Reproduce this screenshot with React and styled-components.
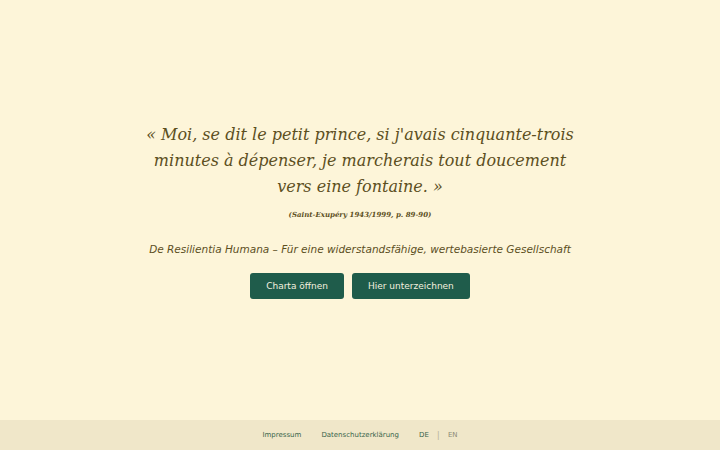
import React from 'react';
import styled, { createGlobalStyle } from 'styled-components';

const GlobalStyle = createGlobalStyle`
  html, body {
    margin: 0;
    padding: 0;
    background: #fdf5d9;
  }
  #root {
    min-height: 100vh;
  }
`;

const Page = styled.div`
  display: flex;
  flex-direction: column;
  height: 100vh;
  background: #fdf5d9;
  color: #5c4f1e;
`;

const Main = styled.main`
  flex: 1;
  display: flex;
  flex-direction: column;
  align-items: center;
  justify-content: center;
  text-align: center;
  padding: 0 20px;
`;

const Quote = styled.blockquote`
  margin: 0;
  max-width: 440px;
  font-family: 'DejaVu Serif', serif;
  font-style: italic;
  font-size: 16px;
  line-height: 26px;
  color: #5c4f1e;
`;

const Cite = styled.p`
  margin: 10px 0 0;
  font-family: 'DejaVu Serif', serif;
  font-style: italic;
  font-weight: bold;
  font-size: 7px;
  color: #5c4f1e;
`;

const Subtitle = styled.p`
  margin: 24px 0 0;
  font-family: 'DejaVu Sans', sans-serif;
  font-style: italic;
  font-size: 10.5px;
  color: #5c4f1e;
`;

const Actions = styled.div`
  display: flex;
  gap: 8px;
  margin-top: 18px;
`;

const Button = styled.a`
  display: inline-flex;
  align-items: center;
  justify-content: center;
  height: 26px;
  padding: 0 16px;
  background: #1f5c4b;
  color: #f3efdf;
  border-radius: 3px;
  font-family: 'DejaVu Sans', sans-serif;
  font-size: 9px;
  text-decoration: none;
  cursor: pointer;
`;

const Footer = styled.footer`
  height: 30px;
  display: flex;
  align-items: center;
  justify-content: center;
  gap: 20px;
  background: #f0e7c9;
  font-family: 'DejaVu Sans', sans-serif;
  font-size: 7px;
`;

const FooterLink = styled.a`
  color: ${(p) => (p.muted ? '#8c8a78' : '#3a654b')};
  text-decoration: none;
`;

const Lang = styled.div`
  display: flex;
  align-items: center;
  gap: 8px;
`;

const Sep = styled.span`
  color: #b9b4a0;
  font-size: 9px;
`;

export default function App() {
  return (
    <Page>
      <GlobalStyle />
      <Main>
        <Quote>
          « Moi, se dit le petit prince, si j'avais cinquante-trois minutes à
          dépenser, je marcherais tout doucement vers eine fontaine. »
        </Quote>
        <Cite>(Saint-Exupéry 1943/1999, p. 89-90)</Cite>
        <Subtitle>
          De Resilientia Humana – Für eine widerstandsfähige, wertebasierte
          Gesellschaft
        </Subtitle>
        <Actions>
          <Button>Charta öffnen</Button>
          <Button>Hier unterzeichnen</Button>
        </Actions>
      </Main>
      <Footer>
        <FooterLink>Impressum</FooterLink>
        <FooterLink>Datenschutzerklärung</FooterLink>
        <Lang>
          <FooterLink>DE</FooterLink>
          <Sep>|</Sep>
          <FooterLink muted>EN</FooterLink>
        </Lang>
      </Footer>
    </Page>
  );
}
